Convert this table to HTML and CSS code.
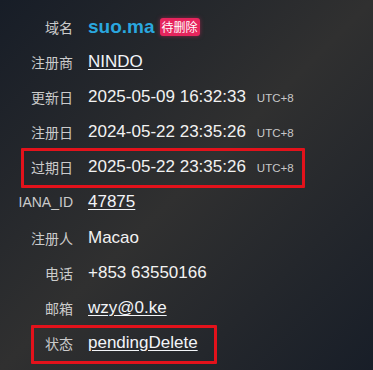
FILE: index.html
```html
<!DOCTYPE html>
<html lang="zh-CN">
<head>
  <meta charset="UTF-8">
  <meta name="viewport" content="width=device-width, initial-scale=1.0">
  <title>suo.ma - Whois</title>
  <link rel="stylesheet" href="styles.css">
</head>
<body>
  <div class="whois">
    <!-- Domain -->
    <div class="row title-row">
      <span class="label">域名</span>
      <span class="value">
        <span class="domain">suo.ma</span>
        <span class="badge">待删除</span>
      </span>
    </div>

    <div class="row">
      <span class="label">注册商</span>
      <span class="value"><a href="#">NINDO</a></span>
    </div>

    <div class="row">
      <span class="label">更新日</span>
      <span class="value">2025-05-09 16:32:33<span class="tz">UTC+8</span></span>
    </div>

    <div class="row">
      <span class="label">注册日</span>
      <span class="value">2024-05-22 23:35:26<span class="tz">UTC+8</span></span>
    </div>

    <!-- Highlighted: expiry -->
    <div class="row mark mark-expiry">
      <span class="label">过期日</span>
      <span class="value">2025-05-22 23:35:26<span class="tz">UTC+8</span></span>
    </div>

    <div class="row">
      <span class="label">IANA_ID</span>
      <span class="value"><a href="#">47875</a></span>
    </div>

    <div class="row">
      <span class="label">注册人</span>
      <span class="value">Macao</span>
    </div>

    <div class="row">
      <span class="label">电话</span>
      <span class="value">+853 63550166</span>
    </div>

    <div class="row">
      <span class="label">邮箱</span>
      <span class="value"><a href="#">wzy@0.ke</a></span>
    </div>

    <!-- Highlighted: status -->
    <div class="row mark mark-status">
      <span class="label">状态</span>
      <span class="value"><a href="#">pendingDelete</a></span>
    </div>
  </div>
</body>
</html>
```

FILE: styles.css
```css
/* General Styles */
html, body {
  height: 100%;
}

body {
  margin: 0;
  padding: 0;
  font-family: "Liberation Sans", Arial, "Noto Sans CJK SC", sans-serif;
  color: #f2f2f2;
  background: linear-gradient(to bottom right, #171d27 0%, #303030 50%, #181e28 100%);
  overflow: hidden;
}

.whois {
  padding-top: 9.5px;
}

.row {
  position: relative;
  display: flex;
  align-items: center;
  height: 35.2px;
}

.title-row {
  height: 34.5px;
}

.label {
  width: 73px;
  flex: none;
  text-align: right;
  font-family: "Liberation Sans", "Noto Sans CJK SC", sans-serif;
  font-size: 14px;
  color: #cbcbcb;
}

.value {
  margin-left: 15px;
  display: flex;
  align-items: baseline;
  font-size: 17px;
  white-space: nowrap;
}

.value a {
  color: #f2f4f8;
  text-decoration: underline;
  text-underline-offset: 2px;
}

.tz {
  margin-left: 11px;
  font-size: 11.5px;
  color: #c8c8c8;
}

.domain {
  font-size: 19px;
  font-weight: bold;
  color: #2aa7df;
}

.badge {
  align-self: center;
  margin-left: 5px;
  padding: 2px 2px;
  border-radius: 3px;
  background: #e6255d;
  box-shadow: 0 0 4px rgba(230, 37, 93, 0.5);
  color: #fff;
  font-family: "Noto Sans CJK SC", sans-serif;
  font-size: 12px;
  line-height: 14px;
}

/* red annotation boxes */
.mark::after {
  content: "";
  position: absolute;
  border: 3px solid #e3121b;
  border-radius: 1px;
  pointer-events: none;
}

.mark-expiry::after {
  left: 21px;
  width: 278px;
  top: -2px;
  bottom: -3px;
}

.mark-status::after {
  left: 31px;
  width: 180px;
  top: -1px;
  bottom: -3px;
}
```
